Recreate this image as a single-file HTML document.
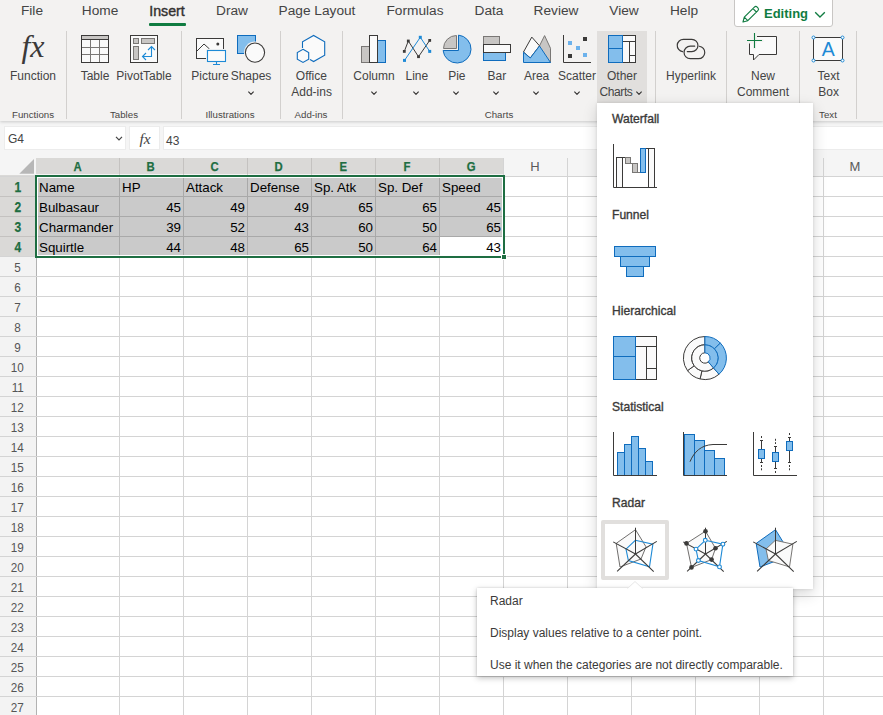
<!DOCTYPE html>
<html lang="en"><head><meta charset="utf-8"><title>Excel</title>
<style>
*{box-sizing:border-box;margin:0;padding:0}
html,body{width:883px;height:715px;overflow:hidden;background:#fff}
body{position:relative;font-family:"Liberation Sans",sans-serif;color:#323130}
.abs{position:absolute}
#ribbon{position:absolute;left:0;top:0;width:883px;height:121px;background:#f3f2f1;box-shadow:0 1px 3px rgba(0,0,0,.18);z-index:2}
.tab{position:absolute;top:1px;height:20px;line-height:20px;font-size:13.7px;color:#444;transform:translateX(-50%);white-space:nowrap}
.lbl{position:absolute;font-size:12px;line-height:16px;height:16px;color:#444;transform:translateX(-50%);white-space:nowrap;text-align:center}
.grp{position:absolute;top:108px;font-size:9.7px;line-height:14px;color:#484644;transform:translateX(-50%);white-space:nowrap}
.sep{position:absolute;top:31px;width:1px;height:88px;background:#d2d0ce}
.chev{position:absolute;width:7px;height:4.4px;transform:translateX(-50%)}
#fbar{position:absolute;left:0;top:121px;width:883px;height:37px;background:#f5f5f5;z-index:1}
.fbox{position:absolute;top:5px;height:24px;background:#fff;border:1px solid #ececec}
#grid{position:absolute;left:0;top:158px;width:883px;height:557px;background:#fff;z-index:0}
.ch{position:absolute;top:0;height:17px;line-height:17px;font-size:13px;text-align:center;color:#5a5a5a}
.rh{position:absolute;left:0;width:35px;height:19px;line-height:21px;font-size:13px;text-align:center;color:#555}
.rh span{display:inline-block;transform:scaleX(.9)}
.rh.sel{font-size:14px}
.ch span{display:inline-block}
.ch.sel span{transform:scaleX(.87)}
.rh.sel span{transform:scaleX(.86)}
.sel{color:#1e6e42;font-weight:bold;-webkit-text-stroke:.25px #1e6e42}
.vl{position:absolute;top:0;width:1px;height:557px;background:#d4d4d4}
.hl{position:absolute;left:0;height:1px;width:883px;background:#d4d4d4}
.cell{position:absolute;height:19px;line-height:21px;font-size:13.33px;color:#000;white-space:nowrap;padding:0 2px}
.num{text-align:right}
#panel{position:absolute;left:597px;top:103px;width:216px;height:486px;background:#fff;box-shadow:0 5px 14px rgba(0,0,0,.16),0 0 3px rgba(0,0,0,.12);z-index:5}
.sec{position:absolute;left:15px;font-size:12.1px;-webkit-text-stroke:.35px #3b3a39;color:#3b3a39;line-height:16px;white-space:nowrap}
.ico{position:absolute;width:48px;height:48px}
#tip{position:absolute;left:477px;top:588px;width:316px;height:88px;background:#fff;box-shadow:0 2px 6px rgba(0,0,0,.25),0 0 2px rgba(0,0,0,.15);z-index:6;font-size:12px;color:#3b3a39}
#tip div{position:absolute;left:13px;line-height:16px;white-space:nowrap}
</style></head>
<body>
<div id="ribbon">
<div class="tab" style="left:32px"><span>File</span></div>
<div class="tab" style="left:100px"><span>Home</span></div>
<div class="tab" style="left:167px"><span style="font-size:14.2px;-webkit-text-stroke:.4px #323130;color:#323130">Insert</span></div>
<div class="tab" style="left:232px"><span>Draw</span></div>
<div class="tab" style="left:317px"><span>Page Layout</span></div>
<div class="tab" style="left:415px"><span>Formulas</span></div>
<div class="tab" style="left:489px"><span>Data</span></div>
<div class="tab" style="left:556px"><span>Review</span></div>
<div class="tab" style="left:624px"><span>View</span></div>
<div class="tab" style="left:684px"><span>Help</span></div>
<div class="abs" style="left:149px;top:23px;width:37px;height:3px;background:#107c41;border-radius:1px"></div>
<div class="abs" style="left:734px;top:-4px;width:99px;height:31px;background:#fff;border:1px solid #c8c6c4;border-radius:3px"></div>
<svg class="abs" style="left:741px;top:4px" width="20" height="20" viewBox="0 0 20 20"><path d="M2 18 L3.3 13.2 L13.4 3.1 a2 2 0 0 1 2.8 0 l0.7 0.7 a2 2 0 0 1 0 2.8 L6.8 16.7 Z M12 4.6 L15.4 8 M3.3 13.2 L6.8 16.7" fill="none" stroke="#107c41" stroke-width="1.15" stroke-linejoin="round"/></svg>
<div class="abs" style="left:764px;top:4px;font-size:13px;line-height:20px;font-weight:bold;color:#107c41">Editing</div>
<svg class="abs" style="left:814px;top:10.5px" width="12" height="8" viewBox="0 0 12 8"><path d="M1.2 1.2 L6 6 L10.8 1.2" fill="none" stroke="#107c41" stroke-width="1.3"/></svg>
<div class="sep" style="left:66px"></div>
<div class="sep" style="left:181px"></div>
<div class="sep" style="left:280px"></div>
<div class="sep" style="left:342px"></div>
<div class="sep" style="left:655px"></div>
<div class="sep" style="left:726px"></div>
<div class="sep" style="left:799px"></div>
<div class="sep" style="left:856px"></div>
<div class="abs" style="left:597px;top:31px;width:50px;height:73px;background:#e1dfdd"></div>
<div class="lbl" style="left:33px;top:68px">Function</div>
<div class="lbl" style="left:95px;top:68px">Table</div>
<div class="lbl" style="left:144px;top:68px">PivotTable</div>
<div class="lbl" style="left:210px;top:68px">Picture</div>
<div class="lbl" style="left:251px;top:68px">Shapes</div>
<svg class="chev" style="left:251px;top:90.8px" viewBox="0 0 8 5"><path d="M1 0.8 L4 3.8 L7 0.8" fill="none" stroke="#323130" stroke-width="1.3"/></svg>
<div class="lbl" style="left:311.4px;top:68px">Office</div>
<div class="lbl" style="left:311.6px;top:84px">Add-ins</div>
<div class="lbl" style="left:374px;top:68px">Column</div>
<svg class="chev" style="left:373.5px;top:90.8px" viewBox="0 0 8 5"><path d="M1 0.8 L4 3.8 L7 0.8" fill="none" stroke="#323130" stroke-width="1.3"/></svg>
<div class="lbl" style="left:416.8px;top:68px">Line</div>
<svg class="chev" style="left:416.3px;top:90.8px" viewBox="0 0 8 5"><path d="M1 0.8 L4 3.8 L7 0.8" fill="none" stroke="#323130" stroke-width="1.3"/></svg>
<div class="lbl" style="left:456.8px;top:68px">Pie</div>
<svg class="chev" style="left:456.3px;top:90.8px" viewBox="0 0 8 5"><path d="M1 0.8 L4 3.8 L7 0.8" fill="none" stroke="#323130" stroke-width="1.3"/></svg>
<div class="lbl" style="left:496.8px;top:68px">Bar</div>
<svg class="chev" style="left:496.3px;top:90.8px" viewBox="0 0 8 5"><path d="M1 0.8 L4 3.8 L7 0.8" fill="none" stroke="#323130" stroke-width="1.3"/></svg>
<div class="lbl" style="left:536.6px;top:68px">Area</div>
<svg class="chev" style="left:536.1px;top:90.8px" viewBox="0 0 8 5"><path d="M1 0.8 L4 3.8 L7 0.8" fill="none" stroke="#323130" stroke-width="1.3"/></svg>
<div class="lbl" style="left:577px;top:68px">Scatter</div>
<svg class="chev" style="left:576.5px;top:90.8px" viewBox="0 0 8 5"><path d="M1 0.8 L4 3.8 L7 0.8" fill="none" stroke="#323130" stroke-width="1.3"/></svg>
<div class="lbl" style="left:622px;top:68px">Other</div>
<div class="lbl" style="left:616px;top:84px"><span style="letter-spacing:-.4px">Charts</span></div>
<svg class="chev" style="left:639px;top:90.8px" viewBox="0 0 8 5"><path d="M1 0.8 L4 3.8 L7 0.8" fill="none" stroke="#323130" stroke-width="1.3"/></svg>
<div class="lbl" style="left:691px;top:68px">Hyperlink</div>
<div class="lbl" style="left:763px;top:68px">New</div>
<div class="lbl" style="left:763px;top:84px">Comment</div>
<div class="lbl" style="left:828.6px;top:68px">Text</div>
<div class="lbl" style="left:828.6px;top:84px">Box</div>
<div class="grp" style="left:33px">Functions</div>
<div class="grp" style="left:124px">Tables</div>
<div class="grp" style="left:230px">Illustrations</div>
<div class="grp" style="left:311px">Add-ins</div>
<div class="grp" style="left:499px">Charts</div>
<div class="grp" style="left:828px">Text</div>
<svg class="abs" style="left:0;top:0" width="883" height="121" viewBox="0 0 883 121" fill="none" stroke-width="1">
<text x="33" y="57.3" text-anchor="middle" font-family="Liberation Serif, serif" font-style="italic" font-size="32" fill="#3b3a39" stroke="none">fx</text>
<g stroke="#797775"><rect x="81.5" y="35.5" width="27" height="27" fill="#fafafa" stroke="#3b3a39"/><rect x="82" y="36" width="26" height="3.5" fill="#c8c6c4" stroke="none"/><path d="M90.5 40V62M99.5 40V62M82 47.5H108M82 54.5H108"/><path d="M81.5 39.5H108.5M81.5 35.5h27v27h-27z" stroke="#3b3a39"/></g>
<g><rect x="130.5" y="35.5" width="27" height="27" fill="#fafafa" stroke="#3b3a39"/><rect x="133.5" y="38.5" width="5" height="5" fill="#c8c6c4" stroke="#797775"/><rect x="141.5" y="38.5" width="13" height="5" fill="#c8c6c4" stroke="#797775"/><rect x="133.5" y="46.5" width="5" height="13" fill="#c8c6c4" stroke="#797775"/><path d="M151.5 46.5V56.5H142.5M148 50L151.5 46.5L155 50M146 53L142.5 56.5L146 60" stroke="#1e8ad6" stroke-width="1.1"/></g>
<g><rect x="196.5" y="38.5" width="27" height="20" fill="#fafafa" stroke="#3b3a39"/><path d="M196.5 51.5L204 44L209.5 49" stroke="#3b3a39"/><circle cx="217.8" cy="44" r="1.5" fill="#3b3a39"/><rect x="206" y="49" width="21" height="14" fill="#f3f2f1"/><rect x="207.5" y="50.5" width="18" height="11" fill="#fafafa" stroke="#1e8ad6" stroke-width="1.1"/><path d="M216.5 61.5V64.5M213 64.5H220" stroke="#1e8ad6" stroke-width="1.1"/></g>
<g><rect x="237.5" y="35.5" width="18" height="18" fill="#83beec" stroke="#0f6cbd"/><circle cx="255" cy="52.6" r="11" fill="#f3f2f1"/><circle cx="255" cy="52.6" r="9.6" fill="#fafafa" stroke="#3b3a39" stroke-width="1.1"/></g>
<g stroke="#0f6cbd" stroke-width="1.1" fill="#fafafa"><path d="M302.5 48V41.8L313.6 35.5L324.7 41.8V55.2L313.6 61.5L310 59.4"/><path d="M303 49.3L308.7 52.5V59.2L303 62.4L297.3 59.2V52.5Z"/></g>
<g><rect x="361.5" y="46.5" width="8" height="16" fill="#c8c6c4" stroke="#797775"/><rect x="377.5" y="40.5" width="8" height="22" fill="#83beec" stroke="#0f6cbd"/><rect x="369.5" y="35.5" width="8" height="27" fill="#fafafa" stroke="#3b3a39"/></g>
<g><path d="M404.3 51.4L408.3 41L418.5 56.7L429.7 40.4" stroke="#3b3a39"/><path d="M404.5 60.4L420.3 37.3L429.7 51.4" stroke="#1e8ad6"/><rect x="402.9" y="50.0" width="2.8" height="2.8" fill="#3b3a39"/><rect x="406.9" y="39.6" width="2.8" height="2.8" fill="#3b3a39"/><rect x="417.1" y="55.3" width="2.8" height="2.8" fill="#3b3a39"/><rect x="428.3" y="39.0" width="2.8" height="2.8" fill="#3b3a39"/><rect x="403.0" y="58.9" width="3" height="3" fill="#1e8ad6"/><rect x="418.8" y="35.8" width="3" height="3" fill="#1e8ad6"/><rect x="428.2" y="49.9" width="3" height="3" fill="#1e8ad6"/></g>
<g><path d="M458.5 35.1A14 14 0 1 1 443.1 50.5H458.5Z" fill="#83beec" stroke="#0f6cbd"/><path d="M456.5 48.5H443.5A13 13 0 0 1 456.5 35.5Z" fill="#c8c6c4" stroke="#797775"/></g>
<g><rect x="483.5" y="36.5" width="16" height="8" fill="#c8c6c4" stroke="#797775"/><rect x="483.5" y="52.5" width="22" height="8" fill="#83beec" stroke="#0f6cbd"/><rect x="483.5" y="44.5" width="27" height="8" fill="#fafafa" stroke="#3b3a39"/></g>
<g><path d="M539.5 45.8L544.6 35.6L550.5 48.3V62.5H539.5Z" fill="#c8c6c4" stroke="#797775"/><path d="M523.5 52L531.8 37.1L539.5 45.8L530.3 58L523.5 52Z" fill="#fafafa" stroke="#3b3a39"/><path d="M523.5 52.3L530.3 58L539.5 46L550.5 62.5H523.5Z" fill="#83beec" stroke="#0f6cbd"/></g>
<g><path d="M563.5 35V62.5H591" stroke="#3b3a39"/><rect x="568" y="41" width="4" height="4" fill="#6cb2ec"/><rect x="576" y="46" width="4" height="4" fill="#6cb2ec"/><rect x="583" y="53" width="4" height="4" fill="#6cb2ec"/><rect x="583" y="37" width="4" height="4" fill="#3b3a39"/><rect x="568" y="54" width="4" height="4" fill="#3b3a39"/></g>
<g><rect x="622.5" y="35.5" width="13" height="27" fill="#fafafa" stroke="#3b3a39"/><path d="M622.5 41.5H635.5M629.5 41.5V62.5M629.5 55.5H635.5" stroke="#3b3a39"/><rect x="608.5" y="35.5" width="14" height="27" fill="#83beec" stroke="#0f6cbd"/><path d="M608.5 48.5H622.5" stroke="#0f6cbd"/></g>
<g stroke="#3b3a39" stroke-width="1.2" stroke-linecap="round"><path d="M687.3 51.6H691.8A6.15 6.15 0 0 0 691.8 39.3H683.4A6.15 6.15 0 0 0 682.6 51.55"/><path d="M694.7 46.2H690.3A6.25 6.25 0 0 0 690.3 58.7H698.6A6.25 6.25 0 0 0 699.3 46.25"/></g>
<g><path d="M749.5 36.5H776.5V54.5H759L753.5 60V54.5H749.5Z" fill="#fafafa" stroke="#3b3a39"/><rect x="746" y="33" width="11" height="10.5" fill="#f3f2f1"/><path d="M754.5 43V49.5M757 40.5H763.5" stroke="#f3f2f1" stroke-width="3"/><path d="M747 40.5H762M754.5 33V48" stroke="#107c41" stroke-width="1.1"/></g>
<g><rect x="813.5" y="37.5" width="29" height="23" fill="#fafafa" stroke="#3b3a39"/><text x="828.2" y="55.7" text-anchor="middle" font-family="Liberation Sans, sans-serif" font-size="19.5" fill="#1e8ad6" stroke="none">A</text><circle cx="813.5" cy="37.5" r="1.5" fill="#fff" stroke="#1e8ad6"/><circle cx="842.5" cy="37.5" r="1.5" fill="#fff" stroke="#1e8ad6"/><circle cx="813.5" cy="60.5" r="1.5" fill="#fff" stroke="#1e8ad6"/><circle cx="842.5" cy="60.5" r="1.5" fill="#fff" stroke="#1e8ad6"/></g>
</svg>

</div>
<div id="fbar">
<div class="fbox" style="left:4px;width:122px"></div>
<div class="fbox" style="left:129px;width:31px"></div>
<div class="fbox" style="left:163px;width:720px;border-right:0"></div>
<div class="abs" style="left:8px;top:10px;font-size:12px;line-height:16px;color:#444">G4</div>
<svg class="abs" style="left:115px;top:15px" width="8" height="5" viewBox="0 0 8 5"><path d="M1 0.8 L4 3.8 L7 0.8" fill="none" stroke="#444" stroke-width="1.2"/></svg>
<div class="abs" style="left:139.5px;top:9px;font-family:'Liberation Serif',serif;font-style:italic;font-size:15.5px;line-height:18px;color:#444">fx</div>
<div class="abs" style="left:166px;top:12px;font-size:12px;line-height:16px;color:#444">43</div>
</div>
<div id="grid">
<div class="abs" style="left:0;top:0;width:883px;height:18px;background:#f5f5f5"></div>
<div class="abs" style="left:0;top:18px;width:36px;height:539px;background:#f3f3f3"></div>
<div class="abs" style="left:36px;top:0;width:468px;height:16px;background:#dad9d7"></div>
<div class="abs" style="left:0;top:17px;width:35px;height:82px;background:#dad9d7"></div>
<svg class="abs" style="left:19px;top:1px" width="15" height="15" viewBox="0 0 15 15"><path d="M15 0 V14.7 H0.3 Z" fill="#b7b7b7"/></svg>
<div class="ch sel" style="left:36px;width:83px"><span>A</span></div>
<div class="ch sel" style="left:119px;width:64px"><span>B</span></div>
<div class="ch sel" style="left:183px;width:64px"><span>C</span></div>
<div class="ch sel" style="left:247px;width:64px"><span>D</span></div>
<div class="ch sel" style="left:311px;width:64px"><span>E</span></div>
<div class="ch sel" style="left:375px;width:64px"><span>F</span></div>
<div class="ch sel" style="left:439px;width:64px"><span>G</span></div>
<div class="ch" style="left:503px;width:64px"><span>H</span></div>
<div class="ch" style="left:567px;width:64px"><span>I</span></div>
<div class="ch" style="left:631px;width:64px"><span>J</span></div>
<div class="ch" style="left:695px;width:64px"><span>K</span></div>
<div class="ch" style="left:759px;width:64px"><span>L</span></div>
<div class="ch" style="left:823px;width:64px"><span>M</span></div>
<div class="rh sel" style="top:19px"><span>1</span></div>
<div class="rh sel" style="top:39px"><span>2</span></div>
<div class="rh sel" style="top:59px"><span>3</span></div>
<div class="rh sel" style="top:79px"><span>4</span></div>
<div class="rh" style="top:99px"><span>5</span></div>
<div class="rh" style="top:119px"><span>6</span></div>
<div class="rh" style="top:139px"><span>7</span></div>
<div class="rh" style="top:159px"><span>8</span></div>
<div class="rh" style="top:179px"><span>9</span></div>
<div class="rh" style="top:199px"><span>10</span></div>
<div class="rh" style="top:219px"><span>11</span></div>
<div class="rh" style="top:239px"><span>12</span></div>
<div class="rh" style="top:259px"><span>13</span></div>
<div class="rh" style="top:279px"><span>14</span></div>
<div class="rh" style="top:299px"><span>15</span></div>
<div class="rh" style="top:319px"><span>16</span></div>
<div class="rh" style="top:339px"><span>17</span></div>
<div class="rh" style="top:359px"><span>18</span></div>
<div class="rh" style="top:379px"><span>19</span></div>
<div class="rh" style="top:399px"><span>20</span></div>
<div class="rh" style="top:419px"><span>21</span></div>
<div class="rh" style="top:439px"><span>22</span></div>
<div class="rh" style="top:459px"><span>23</span></div>
<div class="rh" style="top:479px"><span>24</span></div>
<div class="rh" style="top:499px"><span>25</span></div>
<div class="rh" style="top:519px"><span>26</span></div>
<div class="rh" style="top:539px"><span>27</span></div>
<div class="abs" style="left:37px;top:19px;width:466px;height:79px;background:#cacaca"></div>
<div class="abs" style="left:440px;top:79px;width:63px;height:19px;background:#fff"></div>
<div class="vl" style="left:119px"></div>
<div class="vl" style="left:183px"></div>
<div class="vl" style="left:247px"></div>
<div class="vl" style="left:311px"></div>
<div class="vl" style="left:375px"></div>
<div class="vl" style="left:439px"></div>
<div class="vl" style="left:503px"></div>
<div class="vl" style="left:567px"></div>
<div class="vl" style="left:631px"></div>
<div class="vl" style="left:695px"></div>
<div class="vl" style="left:759px"></div>
<div class="vl" style="left:823px"></div>
<div class="vl" style="left:887px"></div>
<div class="abs" style="left:36px;top:18px;width:1px;height:539px;background:#b2b2b2"></div>
<div class="abs" style="left:36px;top:18px;width:847px;height:1px;background:#c6c6c6"></div>
<div class="hl" style="top:18px"></div>
<div class="hl" style="top:38px"></div>
<div class="hl" style="top:58px"></div>
<div class="hl" style="top:78px"></div>
<div class="hl" style="top:98px"></div>
<div class="hl" style="top:118px"></div>
<div class="hl" style="top:138px"></div>
<div class="hl" style="top:158px"></div>
<div class="hl" style="top:178px"></div>
<div class="hl" style="top:198px"></div>
<div class="hl" style="top:218px"></div>
<div class="hl" style="top:238px"></div>
<div class="hl" style="top:258px"></div>
<div class="hl" style="top:278px"></div>
<div class="hl" style="top:298px"></div>
<div class="hl" style="top:318px"></div>
<div class="hl" style="top:338px"></div>
<div class="hl" style="top:358px"></div>
<div class="hl" style="top:378px"></div>
<div class="hl" style="top:398px"></div>
<div class="hl" style="top:418px"></div>
<div class="hl" style="top:438px"></div>
<div class="hl" style="top:458px"></div>
<div class="hl" style="top:478px"></div>
<div class="hl" style="top:498px"></div>
<div class="hl" style="top:518px"></div>
<div class="hl" style="top:538px"></div>
<div class="hl" style="top:558px"></div>
<div class="abs" style="left:119px;top:20px;width:1px;height:78px;background:#a9a9a9"></div>
<div class="abs" style="left:183px;top:20px;width:1px;height:78px;background:#a9a9a9"></div>
<div class="abs" style="left:247px;top:20px;width:1px;height:78px;background:#a9a9a9"></div>
<div class="abs" style="left:311px;top:20px;width:1px;height:78px;background:#a9a9a9"></div>
<div class="abs" style="left:375px;top:20px;width:1px;height:78px;background:#a9a9a9"></div>
<div class="abs" style="left:439px;top:20px;width:1px;height:78px;background:#a9a9a9"></div>
<div class="abs" style="left:38px;top:38px;width:464px;height:1px;background:#a9a9a9"></div>
<div class="abs" style="left:38px;top:58px;width:464px;height:1px;background:#a9a9a9"></div>
<div class="abs" style="left:38px;top:78px;width:464px;height:1px;background:#a9a9a9"></div>
<div class="abs" style="left:0;top:38px;width:35px;height:1px;background:#c4c2c0"></div>
<div class="abs" style="left:0;top:58px;width:35px;height:1px;background:#c4c2c0"></div>
<div class="abs" style="left:0;top:78px;width:35px;height:1px;background:#c4c2c0"></div>
<div class="abs" style="left:119px;top:0;width:1px;height:16px;background:#c4c2c0"></div>
<div class="abs" style="left:183px;top:0;width:1px;height:16px;background:#c4c2c0"></div>
<div class="abs" style="left:247px;top:0;width:1px;height:16px;background:#c4c2c0"></div>
<div class="abs" style="left:311px;top:0;width:1px;height:16px;background:#c4c2c0"></div>
<div class="abs" style="left:375px;top:0;width:1px;height:16px;background:#c4c2c0"></div>
<div class="abs" style="left:439px;top:0;width:1px;height:16px;background:#c4c2c0"></div>
<div class="cell" style="left:37px;top:19px">Name</div>
<div class="cell" style="left:120px;top:19px">HP</div>
<div class="cell" style="left:184px;top:19px">Attack</div>
<div class="cell" style="left:248px;top:19px">Defense</div>
<div class="cell" style="left:312px;top:19px">Sp. Atk</div>
<div class="cell" style="left:376px;top:19px">Sp. Def</div>
<div class="cell" style="left:440px;top:19px">Speed</div>
<div class="cell" style="left:37px;top:39px">Bulbasaur</div>
<div class="cell num" style="left:119px;top:39px;width:64px">45</div>
<div class="cell num" style="left:183px;top:39px;width:64px">49</div>
<div class="cell num" style="left:247px;top:39px;width:64px">49</div>
<div class="cell num" style="left:311px;top:39px;width:64px">65</div>
<div class="cell num" style="left:375px;top:39px;width:64px">65</div>
<div class="cell num" style="left:439px;top:39px;width:64px">45</div>
<div class="cell" style="left:37px;top:59px">Charmander</div>
<div class="cell num" style="left:119px;top:59px;width:64px">39</div>
<div class="cell num" style="left:183px;top:59px;width:64px">52</div>
<div class="cell num" style="left:247px;top:59px;width:64px">43</div>
<div class="cell num" style="left:311px;top:59px;width:64px">60</div>
<div class="cell num" style="left:375px;top:59px;width:64px">50</div>
<div class="cell num" style="left:439px;top:59px;width:64px">65</div>
<div class="cell" style="left:37px;top:79px">Squirtle</div>
<div class="cell num" style="left:119px;top:79px;width:64px">44</div>
<div class="cell num" style="left:183px;top:79px;width:64px">48</div>
<div class="cell num" style="left:247px;top:79px;width:64px">65</div>
<div class="cell num" style="left:311px;top:79px;width:64px">50</div>
<div class="cell num" style="left:375px;top:79px;width:64px">64</div>
<div class="cell num" style="left:439px;top:79px;width:64px">43</div>
<div class="abs" style="left:35px;top:17px;width:470px;height:83px;border:2px solid #1e6e42"></div>
<div class="abs" style="left:37px;top:19px;width:466px;height:79px;border:1px solid #fff"></div>
<div class="abs" style="left:501px;top:96px;width:6px;height:6px;background:#1e6e42;border:1px solid #fff"></div>
</div>
<div id="panel">
<div class="sec" style="top:8px">Waterfall</div>
<div class="sec" style="top:104px">Funnel</div>
<div class="sec" style="top:200px">Hierarchical</div>
<div class="sec" style="top:296px">Statistical</div>
<div class="sec" style="top:392px">Radar</div>
<div class="abs" style="left:4px;top:417px;width:68px;height:60px;border:4px solid #e1dfdd;background:#fff;border-radius:2px"></div>
<svg class="abs" style="left:0;top:0" width="216" height="486" viewBox="597 103 216 486" fill="none" stroke-width="1">
<g><path d="M613.5 144V187.5H657" stroke="#3b3a39"/><rect x="616.5" y="157.5" width="6" height="30" fill="#fafafa" stroke="#3b3a39"/><rect x="648.5" y="148.5" width="6" height="39" fill="#fafafa" stroke="#3b3a39"/><path d="M622.5 157.5H625.5M645.5 148.5H648.5" stroke="#3b3a39"/><path d="M630.5 163.5H632.5M637.5 172.5H640.5" stroke="#797775"/><rect x="625.5" y="157.5" width="5" height="6" fill="#c8c6c4" stroke="#797775"/><rect x="632.5" y="163.5" width="5" height="9" fill="#c8c6c4" stroke="#797775"/><rect x="640.5" y="148.5" width="5" height="24" fill="#83beec" stroke="#0f6cbd"/></g>
<g fill="#83beec" stroke="#0f6cbd"><rect x="614.5" y="246.5" width="41" height="10"/><rect x="620.5" y="256.5" width="29" height="10"/><rect x="626.5" y="266.5" width="17" height="10"/></g>
<g><rect x="635.5" y="336.5" width="21" height="43" fill="#fafafa" stroke="#3b3a39"/><path d="M635.5 346.5H656.5M646.5 346.5V379.5M646.5 368.5H656.5" stroke="#3b3a39"/><rect x="613.5" y="336.5" width="22" height="43" fill="#83beec" stroke="#0f6cbd"/><path d="M613.5 356.5H635.5" stroke="#0f6cbd"/></g>
<g><path d="M719.01 374.23A21.5 21.5 0 0 1 700.06 378.95L701.93 370.86A13.2 13.2 0 0 0 713.56 367.96Z" fill="#fafafa" stroke="#3b3a39"/><path d="M700.06 378.95A21.5 21.5 0 0 1 687.51 370.64L694.22 365.76A13.2 13.2 0 0 0 701.93 370.86Z" fill="#fafafa" stroke="#3b3a39"/><path d="M687.51 370.64A21.5 21.5 0 0 1 704.90 336.50L704.90 344.80A13.2 13.2 0 0 0 694.22 365.76Z" fill="#fafafa" stroke="#3b3a39"/><path d="M713.56 367.96A13.2 13.2 0 1 1 704.90 344.80L704.90 352.80A5.2 5.2 0 1 0 708.31 361.92Z" fill="#fafafa" stroke="#3b3a39"/><path d="M704.90 336.50A21.5 21.5 0 0 1 720.37 343.06L714.40 348.83A13.2 13.2 0 0 0 704.90 344.80Z" fill="#83beec" stroke="#0f6cbd"/><path d="M720.37 343.06A21.5 21.5 0 0 1 719.01 374.23L713.56 367.96A13.2 13.2 0 0 0 714.40 348.83Z" fill="#83beec" stroke="#0f6cbd"/><path d="M704.90 344.80A13.2 13.2 0 0 1 713.56 367.96L708.31 361.92A5.2 5.2 0 0 0 704.90 352.80Z" fill="#83beec" stroke="#0f6cbd"/></g>
<g fill="#83beec" stroke="#0f6cbd"><rect x="617.5" y="452.5" width="7" height="23.0"/><rect x="624.5" y="444.5" width="7" height="31.0"/><rect x="631.5" y="436.5" width="7" height="39.0"/><rect x="638.5" y="448.5" width="7" height="27.0"/><rect x="645.5" y="461.5" width="7" height="14.0"/><path d="M613.5 432V475.5H657" stroke="#3b3a39" fill="none"/></g>
<g fill="#83beec" stroke="#0f6cbd"><rect x="684.5" y="434.5" width="10" height="41.0"/><rect x="694.5" y="440.5" width="10" height="35.0"/><rect x="704.5" y="450.5" width="10" height="25.0"/><rect x="714.5" y="458.5" width="10" height="17.0"/><path d="M683.5 432V475.5H727" stroke="#3b3a39" fill="none"/><path d="M690 461.7C694 452 701 445 713 444.5H727" stroke="#3b3a39" fill="none"/></g>
<g><path d="M753.5 432V475.5H797" stroke="#3b3a39"/><path d="M761.5 436V438M761.5 465V467M761.5 468.3V470.3M761.5 440.5V462.5M760.0 440.5h3M760.0 462.5h3" stroke="#3b3a39"/><rect x="758.5" y="449.5" width="6" height="9.0" fill="#83beec" stroke="#0f6cbd"/><path d="M775.5 438.8V440.8M775.5 442.2V444M775.5 471V473M775.5 446.5V468.5M774.0 446.5h3M774.0 468.5h3" stroke="#3b3a39"/><rect x="772.5" y="452.5" width="6" height="9.0" fill="#83beec" stroke="#0f6cbd"/><path d="M789.5 433V435M789.5 465V467M789.5 468.3V470.3M789.5 437.5V462.5M788.0 437.5h3M788.0 462.5h3" stroke="#3b3a39"/><rect x="786.5" y="441.5" width="6" height="9.0" fill="#83beec" stroke="#0f6cbd"/></g>
<g><polygon points="635.5,529.7 646.0,546.8 641.0,559.0 620.0,567.0 616.2,543.4" fill="#fafafa" stroke="#605e5c" stroke-width="0.9"/><polygon points="635.3,540.3 652.9,544.2 649.5,566.9 628.4,560.5 626.0,549.1" fill="none" stroke="#1e8ad6" stroke-width="1.1"/><path d="M635.5 554L635.5 527.7" stroke="#3b3a39" stroke-width="1.05"/><path d="M635.5 554L656.8 541.4" stroke="#3b3a39" stroke-width="1.05"/><path d="M635.5 554L653.7 571.6" stroke="#3b3a39" stroke-width="1.05"/><path d="M635.5 554L617.1 571.3" stroke="#3b3a39" stroke-width="1.05"/><path d="M635.5 554L613.2 541.9" stroke="#3b3a39" stroke-width="1.05"/></g>
<g><polygon points="705.5,531.2 715.5,548.3 711.6,559.6 691.5,567.4 686.5,543.4" fill="#fafafa" stroke="#605e5c" stroke-width="0.9"/><polygon points="705.3,540.3 722.9,544.2 719.5,566.9 698.4,560.5 696.0,549.1" fill="none" stroke="#1e8ad6" stroke-width="1.1"/><path d="M705.5 554L705.5 527.7" stroke="#3b3a39" stroke-width="1.05"/><path d="M705.5 554L726.8 541.4" stroke="#3b3a39" stroke-width="1.05"/><path d="M705.5 554L723.7 571.6" stroke="#3b3a39" stroke-width="1.05"/><path d="M705.5 554L687.1 571.3" stroke="#3b3a39" stroke-width="1.05"/><path d="M705.5 554L683.2 541.9" stroke="#3b3a39" stroke-width="1.05"/><circle cx="705.5" cy="531.2" r="2.3" fill="#3b3a39"/><circle cx="715.5" cy="548.3" r="2.3" fill="#3b3a39"/><circle cx="711.6" cy="559.6" r="2.3" fill="#3b3a39"/><circle cx="691.5" cy="567.4" r="2.3" fill="#3b3a39"/><circle cx="686.5" cy="543.4" r="2.3" fill="#3b3a39"/><circle cx="705.3" cy="540.3" r="1.9" fill="#fff" stroke="#1e8ad6" stroke-width="1.1"/><circle cx="722.9" cy="544.2" r="1.9" fill="#fff" stroke="#1e8ad6" stroke-width="1.1"/><circle cx="719.5" cy="566.9" r="1.9" fill="#fff" stroke="#1e8ad6" stroke-width="1.1"/><circle cx="698.4" cy="560.5" r="1.9" fill="#fff" stroke="#1e8ad6" stroke-width="1.1"/><circle cx="696.0" cy="549.1" r="1.9" fill="#fff" stroke="#1e8ad6" stroke-width="1.1"/></g>
<g><polygon points="775.5,529.7 786.0,546.8 781.0,559.0 760.0,567.0 756.2,543.4" fill="#83beec" stroke="#0f6cbd"/><polygon points="775.3,540.3 792.9,544.2 789.5,566.9 768.4,560.5 766.0,549.1" fill="#fafafa" stroke="#797775"/><path d="M775.5 554L775.5 527.7" stroke="#3b3a39" stroke-width="1.05"/><path d="M775.5 554L796.8 541.4" stroke="#3b3a39" stroke-width="1.05"/><path d="M775.5 554L793.7 571.6" stroke="#3b3a39" stroke-width="1.05"/><path d="M775.5 554L757.1 571.3" stroke="#3b3a39" stroke-width="1.05"/><path d="M775.5 554L753.2 541.9" stroke="#3b3a39" stroke-width="1.05"/></g>
</svg>

</div>
<svg class="abs" style="left:627px;top:581px;z-index:7" width="16" height="8" viewBox="0 0 16 8"><path d="M0 8 L8 0 L16 8 Z" fill="#fff"/><path d="M0.5 7.5 L8 0.5 L15.5 7.5" fill="none" stroke="#e6e6e6" stroke-width="1"/></svg>
<div id="tip">
<div style="top:5px">Radar</div>
<div style="top:37px">Display values relative to a center point.</div>
<div style="top:69px">Use it when the categories are not directly comparable.</div>
</div>
</body></html>
